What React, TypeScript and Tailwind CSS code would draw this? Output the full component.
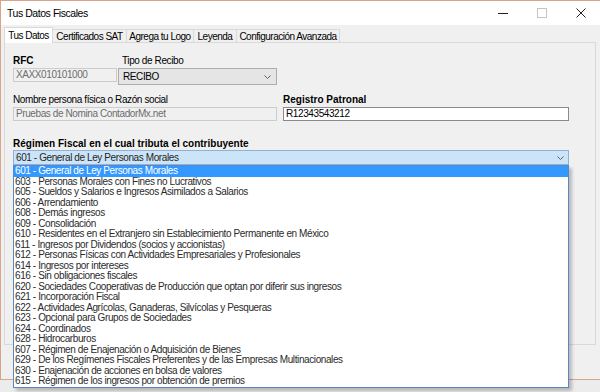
import React from 'react';

const regimenes = [
  '601 - General de Ley Personas Morales',
  '603 - Personas Morales con Fines no Lucrativos',
  '605 - Sueldos y Salarios e Ingresos Asimilados a Salarios',
  '606 - Arrendamiento',
  '608 - Demás ingresos',
  '609 - Consolidación',
  '610 - Residentes en el Extranjero sin Establecimiento Permanente en México',
  '611 - Ingresos por Dividendos (socios y accionistas)',
  '612 - Personas Físicas con Actividades Empresariales y Profesionales',
  '614 - Ingresos por intereses',
  '616 - Sin obligaciones fiscales',
  '620 - Sociedades Cooperativas de Producción que optan por diferir sus ingresos',
  '621 - Incorporación Fiscal',
  '622 - Actividades Agrícolas, Ganaderas, Silvícolas y Pesqueras',
  '623 - Opcional para Grupos de Sociedades',
  '624 - Coordinados',
  '628 - Hidrocarburos',
  '607 - Régimen de Enajenación o Adquisición de Bienes',
  '629 - De los Regímenes Fiscales Preferentes y de las Empresas Multinacionales',
  '630 - Enajenación de acciones en bolsa de valores',
  '615 - Régimen de los ingresos por obtención de premios',
];

const tabs = [
  { label: 'Tus Datos', w: 'w-[49px]' },
  { label: 'Certificados SAT', w: 'w-[74px]' },
  { label: 'Agrega tu Logo', w: 'w-[67px]' },
  { label: 'Leyenda', w: 'w-[43px]' },
  { label: 'Configuración Avanzada', w: 'w-[103px]' },
];

function Chevron({ className = '' }: { className?: string }) {
  return (
    <svg width="7" height="4" viewBox="0 0 7 4" className={className}>
      <path d="M0.5 0.5 L3.5 3.5 L6.5 0.5" fill="none" stroke="#606060" strokeWidth="1" />
    </svg>
  );
}

function TitleBar() {
  return (
    <div className="flex h-[24px] items-center bg-white">
      <span className="flex-1 whitespace-nowrap pl-[6px] text-[10.5px] leading-none tracking-[-0.45px] text-black">
        Tus Datos Fiscales
      </span>
      <div className="flex h-full">
        <div className="flex w-[39px] items-center justify-center">
          <svg width="10" height="10" viewBox="0 0 10 10">
            <path d="M0 5.5 H10" stroke="#222" strokeWidth="1" />
          </svg>
        </div>
        <div className="flex w-[39px] items-center justify-center">
          <svg width="10" height="10" viewBox="0 0 10 10">
            <rect x="0.5" y="0.5" width="9" height="9" fill="none" stroke="#c4c4c4" strokeWidth="1" />
          </svg>
        </div>
        <div className="flex w-[39px] items-center justify-center">
          <svg width="10" height="10" viewBox="0 0 10 10">
            <path d="M0.5 0.5 L9.5 9.5 M9.5 0.5 L0.5 9.5" stroke="#222" strokeWidth="1" />
          </svg>
        </div>
      </div>
    </div>
  );
}

function TabStrip() {
  return (
    <div className="ml-[3px] flex h-[17px] items-end whitespace-nowrap text-[10px] tracking-[-0.5px]">
      {tabs.map((t, i) =>
        i === 0 ? (
          <div
            key={t.label}
            className={`${t.w} relative z-10 -mb-px flex h-[16px] items-center justify-center border border-b-0 border-[#d9d9d9] bg-white`}
          >
            {t.label}
          </div>
        ) : (
          <div
            key={t.label}
            className={`${t.w} flex h-[13px] items-center justify-center border border-l-0 border-b-0 border-[#d9d9d9] bg-[#f0f0f0]`}
          >
            {t.label}
          </div>
        )
      )}
    </div>
  );
}

function DropdownList() {
  return (
    <div className="absolute left-[13px] top-[165px] w-[556px] border border-[#5a86c5] bg-white text-[10px] leading-[10.5px] tracking-[-0.4px] shadow-[3px_3px_3px_rgba(0,0,0,0.22)]">
      {regimenes.map((r, i) => (
        <div
          key={r}
          className={
            i === 0
              ? 'h-[10.5px] whitespace-nowrap bg-[#3399ff] pl-[1px] text-white'
              : 'h-[10.5px] whitespace-nowrap pl-[1px] text-[#2b2b2b]'
          }
        >
          {r}
        </div>
      ))}
    </div>
  );
}

export default function App() {
  return (
    <div className="relative h-[392px] w-[600px] overflow-hidden bg-[#ececec] font-['Liberation_Sans',Arial,sans-serif] text-black">
      <div className="flex h-[380px] flex-col border-y border-l border-[#d9a48c] bg-[#f0f0f0]">
        <TitleBar />
        <TabStrip />
        <div className="ml-[3px] h-[303px] w-[592px] whitespace-nowrap border border-[#d9d9d9] bg-[#f0f0f0] pl-[8px] pt-[11px] text-[10px] leading-[13px] tracking-[-0.4px]">
          <div className="flex items-start">
            <div className="flex w-[104px] flex-col">
              <span className="font-bold tracking-normal">RFC</span>
              <div className="mt-[1px] h-[14px] border border-[#cccccc] bg-[#f0f0f0] pl-[2px] leading-[12px] text-[#6d6d6d]">
                XAXX010101000
              </div>
            </div>
            <div className="ml-[1px] flex w-[159px] flex-col">
              <span className="pl-[4px]">Tipo de Recibo</span>
              <div className="mt-[1px] flex h-[17px] items-center justify-between border border-[#adadad] bg-[#e5e5e5] pl-[4px] pr-[5px]">
                <span>RECIBO</span>
                <Chevron />
              </div>
            </div>
          </div>

          <div className="mt-[8px] flex items-start gap-[6px]">
            <div className="flex w-[264px] flex-col">
              <span>Nombre persona física o Razón social</span>
              <div className="mt-[1px] h-[14px] border border-[#cccccc] bg-[#f0f0f0] pl-[2px] leading-[12px] text-[#6d6d6d]">
                Pruebas de Nomina ContadorMx.net
              </div>
            </div>
            <div className="flex w-[286px] flex-col">
              <span className="font-bold tracking-normal">Registro Patronal</span>
              <div className="mt-[1px] h-[14px] border border-[#8a8a8a] bg-white pl-[2px] leading-[12px] text-black">
                R12343543212
              </div>
            </div>
          </div>

          <div className="mt-[17px] flex w-[556px] flex-col">
            <span className="font-bold leading-[12px] tracking-normal">
              Régimen Fiscal en el cual tributa el contribuyente
            </span>
            <div className="flex h-[15px] items-center justify-between border border-[#8fb0d8] bg-[#cce4f7] pl-[2px] pr-[4px] leading-[13px] text-[#262626]">
              <span>601 - General de Ley Personas Morales</span>
              <Chevron />
            </div>
          </div>
        </div>
      </div>
      <DropdownList />
    </div>
  );
}
